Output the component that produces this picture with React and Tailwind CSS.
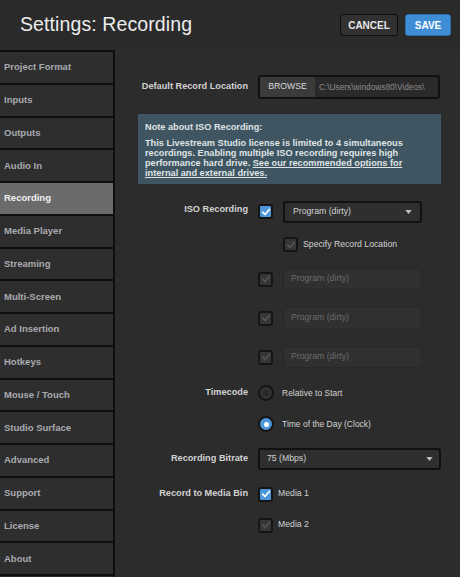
import React from 'react';

const navItems = [
  'Project Format',
  'Inputs',
  'Outputs',
  'Audio In',
  'Recording',
  'Media Player',
  'Streaming',
  'Multi-Screen',
  'Ad Insertion',
  'Hotkeys',
  'Mouse / Touch',
  'Studio Surface',
  'Advanced',
  'Support',
  'License',
  'About',
];

const CheckIcon = ({ color }) => (
  <svg viewBox="0 0 12 12" className="w-[10px] h-[10px]">
    <path d="M2 6.2 L4.8 9 L10 3" fill="none" stroke={color} strokeWidth="2" strokeLinecap="round" strokeLinejoin="round" />
  </svg>
);

const Checkbox = ({ checked }) => (
  <div
    className={
      checked
        ? 'w-[15px] h-[15px] rounded-[3px] border-2 border-[#151515] bg-[#4b97da] flex items-center justify-center shrink-0'
        : 'w-[15px] h-[15px] rounded-[3px] border-2 border-[#151515] bg-[#363636] flex items-center justify-center shrink-0'
    }
  >
    <CheckIcon color={checked ? '#ffffff' : '#555555'} />
  </div>
);

const Radio = ({ checked }) => (
  <div
    className={
      checked
        ? 'w-[16px] h-[16px] rounded-full border-2 border-[#151515] bg-[#4b97da] flex items-center justify-center shrink-0'
        : 'w-[16px] h-[16px] rounded-full border-2 border-[#151515] bg-[#333333] flex items-center justify-center shrink-0'
    }
  >
    <div className={checked ? 'w-[5px] h-[5px] rounded-full bg-white' : 'w-[6px] h-[6px] rounded-full bg-[#262626]'} />
  </div>
);

const Caret = () => (
  <svg viewBox="0 0 8 5" className="w-[7px] h-[4px]">
    <path d="M0 0 L8 0 L4 5 Z" fill="#bdbdbd" />
  </svg>
);

const Label = ({ children }) => (
  <div className="w-[143px] pr-[10px] text-right font-bold text-[9.2px] text-[#d2d2d2] shrink-0">{children}</div>
);

const DisabledRow = () => (
  <div className="flex items-center h-[22px]">
    <div className="w-[143px] shrink-0" />
    <div className="flex items-center gap-[10px]">
      <Checkbox />
      <div className="w-[139px] h-[22px] rounded-[3px] border border-[#282828] bg-[#303030] flex items-center px-[7px] text-[8.7px] text-[#6c6c6c]">
        Program (dirty)
      </div>
    </div>
  </div>
);

export default function App() {
  return (
    <div className="w-[460px] h-[577px] bg-[#2c2c2c] flex flex-col overflow-hidden" style={{ fontFamily: '"Liberation Sans", Arial, sans-serif' }}>
      {/* Header */}
      <div className="h-[50px] bg-[#2a2a2a] flex items-center justify-between pl-[20px] pr-[9px] shrink-0">
        <h1 className="text-[19.5px] text-[#ececec] tracking-[0.1px]">Settings: Recording</h1>
        <div className="flex items-center gap-[7px]">
          <button className="w-[58px] h-[22px] rounded-[3px] border-[1.5px] border-[#0e0e0e] bg-[#313131] text-[10px] font-bold text-[#e8e8e8]">
            CANCEL
          </button>
          <button className="w-[46px] h-[22px] rounded-[3px] bg-[#3e8dd5] border border-[#2c6fae] text-[10px] font-bold text-white">
            SAVE
          </button>
        </div>
      </div>

      <div className="flex flex-1 min-h-0">
        {/* Sidebar */}
        <div className="w-[115px] shrink-0 border-r-2 border-[#0f0f0f] border-t-2 border-t-[#0f0f0f] flex flex-col">
          {navItems.map((item) => (
            <div
              key={item}
              className={
                item === 'Recording'
                  ? 'h-[32.77px] shrink-0 border-b-2 border-[#0f0f0f] bg-[#6b6b6b] flex items-center pl-[4px] text-[9.5px] font-bold text-[#f2f2f2]'
                  : 'h-[32.77px] shrink-0 border-b-2 border-[#0f0f0f] bg-[#2e2e2e] flex items-center pl-[4px] text-[9.5px] font-bold text-[#a9abb0]'
              }
            >
              {item}
            </div>
          ))}
        </div>

        {/* Content */}
        <div className="flex-1 flex flex-col pt-[25px]">
          <div className="flex items-center h-[24px]">
            <Label>Default Record Location</Label>
            <div className="flex h-[24px] w-[182px] rounded-[3px] border-2 border-[#111111] bg-[#2a2a2a] overflow-hidden">
              <div className="w-[55px] bg-[#3b3b3b] flex items-center justify-center text-[8.7px] text-[#d8d8d8] shrink-0">BROWSE</div>
              <div className="flex items-center pl-[4px] text-[8.3px] text-[#8c8c8c] whitespace-nowrap">C:\Users\windows80\Videos\</div>
            </div>
          </div>

          {/* ISO note */}
          <div className="ml-[23px] mt-[15px] w-[303px] h-[70px] bg-[#3f5662] px-[7px] pt-[8px] text-[9.2px] font-bold leading-[10px] text-[#dfe3e5]">
            <p className="mb-[6px]">Note about ISO Recording:</p>
            <div className="flex flex-col whitespace-nowrap">
              <span>This Livestream Studio license is limited to 4 simultaneous</span>
              <span>recordings. Enabling multiple ISO recording requires high</span>
              <div className="flex gap-[2.5px]">
                <span>performance hard drive.</span>
                <span className="underline">See our recommended options for</span>
              </div>
              <span className="underline self-start">internal and external drives.</span>
            </div>
          </div>

          <div className="flex items-start mt-[17px]">
            <div className="pt-[2px]">
              <Label>ISO Recording</Label>
            </div>
            <div className="flex flex-col">
              <div className="flex items-start gap-[10px]">
                <div className="pt-[3px]">
                  <Checkbox checked />
                </div>
                <div className="w-[139px] h-[22px] rounded-[3px] border-2 border-[#111111] bg-[#2f2f2f] flex items-center justify-between px-[8px] text-[8.7px] text-[#d2d2d2]">
                  <span>Program (dirty)</span>
                  <Caret />
                </div>
              </div>
              <div className="flex items-center gap-[5px] ml-[25px] mt-[14px]">
                <Checkbox />
                <span className="text-[8.7px] text-[#d2d2d2]">Specify Record Location</span>
              </div>
            </div>
          </div>

          <div className="flex flex-col gap-[17px] mt-[16px]">
            <DisabledRow />
            <DisabledRow />
            <DisabledRow />
          </div>

          <div className="flex items-center mt-[17px] h-[16px]">
            <Label>Timecode</Label>
            <div className="flex items-center gap-[8px]">
              <Radio />
              <span className="text-[8.5px] text-[#d2d2d2]">Relative to Start</span>
            </div>
          </div>
          <div className="flex items-center mt-[15px] h-[16px]">
            <div className="w-[143px] shrink-0" />
            <div className="flex items-center gap-[8px]">
              <Radio checked />
              <span className="text-[8.5px] text-[#d2d2d2]">Time of the Day (Clock)</span>
            </div>
          </div>

          <div className="flex items-center mt-[16px] h-[22px]">
            <Label>Recording Bitrate</Label>
            <div className="w-[183px] h-[22px] rounded-[3px] border-2 border-[#111111] bg-[#2f2f2f] flex items-center justify-between pl-[7px] pr-[6px] text-[8.7px] text-[#d2d2d2]">
              <span>75 (Mbps)</span>
              <Caret />
            </div>
          </div>

          <div className="flex items-center mt-[16px] h-[16px]">
            <Label>Record to Media Bin</Label>
            <div className="flex items-center gap-[5px]">
              <Checkbox checked />
              <span className="text-[8.7px] text-[#d2d2d2]">Media 1</span>
            </div>
          </div>
          <div className="flex items-center mt-[15px] h-[16px]">
            <div className="w-[143px] shrink-0" />
            <div className="flex items-center gap-[5px]">
              <Checkbox />
              <span className="text-[8.7px] text-[#d2d2d2]">Media 2</span>
            </div>
          </div>
        </div>
      </div>
    </div>
  );
}
